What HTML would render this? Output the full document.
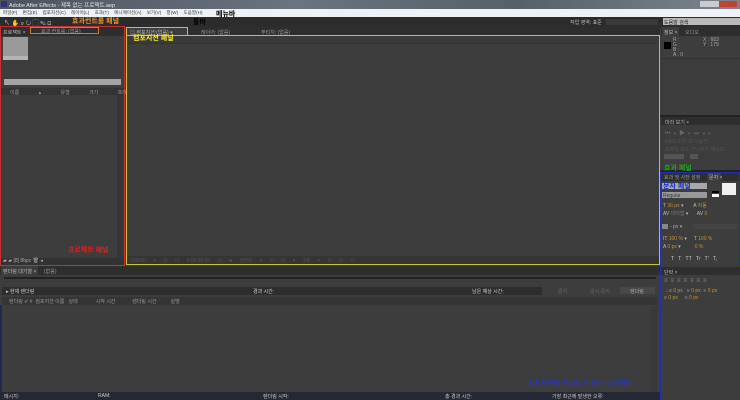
<!DOCTYPE html>
<html><head><meta charset="utf-8"><style>
*{margin:0;padding:0;box-sizing:border-box}
body{width:740px;height:400px;background:#3d3d3d;position:relative;overflow:hidden;font-family:"Liberation Sans","Noto Sans CJK KR",sans-serif;font-size:5px;color:#aaa}
div{position:absolute}
.t{white-space:nowrap}
</style></head><body>
<!-- title -->
<div style="left:0;top:0;width:740px;height:9px;background:linear-gradient(90deg,#4a5560,#6a7480 40%,#55606a 70%,#7a8590)"></div>
<div style="left:1px;top:1px;width:6px;height:6px;background:#3b2e7a"></div>
<div class="t" style="left:9px;top:1px;color:#e8e8e8;font-size:5.5px">Adobe After Effects - 제목 없는 프로젝트.aep</div>
<div style="left:700px;top:1px;width:13px;height:6px;background:#c8ccd0"></div>
<div style="left:713px;top:1px;width:6px;height:6px;background:#c8ccd0"></div>
<div style="left:719px;top:1px;width:18px;height:6px;background:#c84030"></div>
<!-- menu -->
<div style="left:0;top:9px;width:740px;height:8px;background:#eef1f5"></div>
<div class="t" style="left:3px;top:10px;color:#333;font-size:4.6px;word-spacing:4px">파일(F) 편집(E) 컴포지션(C) 레이어(L) 효과(T) 애니메이션(A) 보기(V) 창(W) 도움말(H)</div>
<div class="t" style="left:216px;top:9px;color:#000;font-size:7px;font-weight:bold">메뉴바</div>
<!-- toolbar -->
<div style="left:0;top:17px;width:740px;height:10px;background:#2c2c2c"></div>
<div class="t" style="left:4px;top:18px;color:#ddd;font-size:6px">↖ ✋ ⌕ ↻ ⬚ ✎ ⊡</div>
<div class="t" style="left:72px;top:16px;color:#e8902a;font-size:7px;font-weight:bold">효과컨트롤 패널</div>
<div class="t" style="left:193px;top:17px;color:#000;font-size:7px;font-weight:bold">툴바</div>
<div class="t" style="left:570px;top:19px;color:#bbb">작업 영역: 표준</div>
<div style="left:606px;top:19px;width:52px;height:6px;background:#3a3a3a"></div>
<div style="left:663px;top:18px;width:77px;height:7px;background:#b9b9b9"></div>
<div class="t" style="left:664px;top:18.5px;color:#222">도움말 검색</div>
<!-- project panel -->
<div style="left:0;top:26px;width:125px;height:240px;background:#3d3d3d;border:1px solid #c83030"></div>
<div style="left:1px;top:27px;width:123px;height:9px;background:#2e2e2e"></div>
<div class="t" style="left:3px;top:29px;color:#bbb">프로젝트 ×</div>
<div style="left:30px;top:27px;width:69px;height:7px;border:1px solid #d07a20"></div>
<div class="t" style="left:41px;top:28px;color:#999">효과 컨트롤: (없음)</div>
<div style="left:3px;top:37px;width:25px;height:23px;background:#9a9a9a"></div>
<div style="left:3px;top:56px;width:25px;height:4px;background:#b5b5b5"></div>
<div style="left:4px;top:79px;width:117px;height:6px;background:#a5a5a5"></div>
<div style="left:1px;top:88px;width:123px;height:7px;background:#343434"></div>
<div class="t" style="left:10px;top:89px;color:#999;word-spacing:18px">이름 ▴ 유형 크기 프레임</div>
<div style="left:117px;top:95px;width:6px;height:163px;background:#353535"></div>
<div class="t" style="left:68px;top:245px;color:#e02020;font-size:7px;font-weight:bold">프로젝트 패널</div>
<div style="left:1px;top:258px;width:123px;height:7px;background:#333"></div>
<div class="t" style="left:3px;top:258px;color:#aaa">▰ ▰ [8] 8bpc 🗑 ◂</div>
<!-- comp panel -->
<div style="left:126px;top:27px;width:534px;height:9px;background:#2e2e2e"></div>
<div style="left:126px;top:27px;width:62px;height:9px;border:1px solid #c8c040;border-bottom:none;background:#3d3d3d"></div>
<div class="t" style="left:130px;top:28.5px;color:#bbb">▤ 컴포지션:(없음) ▾</div>
<div class="t" style="left:201px;top:28.5px;color:#999">레이어: (없음)</div>
<div class="t" style="left:261px;top:28.5px;color:#999">푸티지: (없음)</div>
<div style="left:126px;top:35px;width:534px;height:230px;border:1px solid #c8c040;background:#3d3d3d"></div>
<div style="left:127px;top:36px;width:532px;height:8px;background:#3a3a3a;border-bottom:1px solid #333"></div>
<div class="t" style="left:133px;top:33px;color:#ffee30;font-size:7px;font-weight:bold">컴포지션 패널</div>
<div style="left:127px;top:256px;width:532px;height:8px;background:#353535"></div>
<div class="t" style="left:130px;top:257px;color:#555;word-spacing:6px">(100%) ▾ ⊡ ⊡ 0:00:00:00 ⊡ ♣ (전체) ▾ ⊡ ⊡ ▾ 1뷰 ▾ ⊡ ⊡ ⊡</div>
<!-- right: info -->
<div style="left:661px;top:27px;width:79px;height:9px;background:#2e2e2e"></div>
<div style="left:662px;top:27px;width:17px;height:9px;background:#3d3d3d"></div>
<div class="t" style="left:664px;top:29px;color:#bbb">정보 ×</div>
<div class="t" style="left:685px;top:29px;color:#999">오디오</div>
<div style="left:664px;top:42px;width:7px;height:7px;background:#000"></div>
<div class="t" style="left:673px;top:38px;color:#aaa;line-height:5px">R :<br>G :<br>B :<br>A : 0</div>
<div class="t" style="left:703px;top:38px;color:#aaa;line-height:5px">X : 683<br>Y : 179</div>
<div style="left:661px;top:58px;width:79px;height:1px;background:#333"></div>
<div style="left:660px;top:115px;width:80px;height:2px;background:#222"></div>
<div style="left:661px;top:117px;width:79px;height:8px;background:#2e2e2e"></div>
<div class="t" style="left:665px;top:119px;color:#bbb">미리 보기 ×</div>
<div class="t" style="left:665px;top:128px;color:#666;font-size:6px;letter-spacing:3px">⏮◂▶▸⏭◂▸</div>
<div class="t" style="left:665px;top:138px;color:#555;line-height:8px">RAM 미리 보기 옵션<br>프레임 속도 건너뛰기 해상도</div>
<div style="left:664px;top:154px;width:20px;height:5px;background:#555"></div>
<div style="left:690px;top:154px;width:8px;height:5px;background:#555"></div>
<div style="left:660px;top:170px;width:80px;height:2px;background:#222"></div>
<div class="t" style="left:664px;top:163px;color:#20a020;font-size:7px;font-weight:bold">효과 패널</div>
<!-- character -->
<div style="left:660px;top:172px;width:80px;height:94px;border:1px solid #2030b0;background:#3d3d3d"></div>
<div style="left:661px;top:173px;width:78px;height:8px;background:#2e2e2e"></div>
<div class="t" style="left:664px;top:174px;color:#999">효과 및 사전 설정</div>
<div style="left:707px;top:173px;width:14px;height:8px;background:#3d3d3d"></div>
<div class="t" style="left:709px;top:174px;color:#bbb">문자 ×</div>
<div style="left:662px;top:183px;width:45px;height:6px;background:#a8a8a8"></div>
<div class="t" style="left:663px;top:181px;color:#1530d0;font-size:7px;font-weight:bold">문자 패널</div>
<div style="left:662px;top:192px;width:45px;height:6px;background:#999"></div>
<div class="t" style="left:663px;top:192.5px;color:#333">Regular</div>
<div style="left:722px;top:183px;width:14px;height:12px;background:#f0f0f0"></div>
<div style="left:712px;top:191px;width:7px;height:2px;background:#000"></div>
<div style="left:712px;top:194px;width:7px;height:3px;background:#fff"></div>
<div class="t" style="left:663px;top:202px;color:#bbb;font-size:5px;line-height:8px">T <span style="color:#c8902a">36 px</span> ▾ &nbsp;&nbsp;&nbsp;&nbsp;&nbsp;&nbsp;A <span style="color:#c8902a">자동</span><br>AV <span style="color:#777">미터법</span> ▾ &nbsp;&nbsp;&nbsp;&nbsp;&nbsp;AV <span style="color:#c8902a">0</span></div>
<div style="left:662px;top:224px;width:6px;height:5px;background:#888"></div>
<div class="t" style="left:670px;top:224px;color:#aaa">- px ▾</div>
<div style="left:693px;top:224px;width:44px;height:5px;background:#444"></div>
<div class="t" style="left:663px;top:235px;color:#bbb;line-height:8px">IT <span style="color:#c8902a">100 %</span> ▾ &nbsp;&nbsp;&nbsp;&nbsp;T <span style="color:#c8902a">100 %</span><br>A <span style="color:#c8902a">0 px</span> ▾ &nbsp;&nbsp;&nbsp;&nbsp;&nbsp;&nbsp;&nbsp;&nbsp;&nbsp;<span style="color:#c8902a">0 %</span></div>
<div class="t" style="left:671px;top:256px;color:#ccc;word-spacing:3px">T T TT Tr T' T,</div>
<!-- paragraph -->
<div style="left:660px;top:266px;width:80px;height:134px;border-left:1px solid #2030b0;background:#3d3d3d"></div>
<div style="left:661px;top:267px;width:79px;height:8px;background:#2e2e2e"></div>
<div class="t" style="left:664px;top:269px;color:#bbb">단락 ×</div>
<div class="t" style="left:664px;top:278px;color:#888;font-size:6px;letter-spacing:3px">≡≡≡≡≡≡≡</div>
<div class="t" style="left:664px;top:288px;color:#999;line-height:7px">→≡ <span style="color:#c8902a">0 px</span> &nbsp;&nbsp;≡ <span style="color:#c8902a">0 px</span> &nbsp;≡ <span style="color:#c8902a">0 px</span><br>≡ <span style="color:#c8902a">0 px</span> &nbsp;&nbsp;&nbsp;&nbsp;≡ <span style="color:#c8902a">0 px</span></div>
<!-- render queue -->
<div style="left:0;top:266px;width:660px;height:134px;background:#3d3d3d"></div>
<div style="left:0;top:266px;width:660px;height:9px;background:#2e2e2e"></div>
<div style="left:1px;top:266px;width:37px;height:9px;background:#3d3d3d"></div>
<div class="t" style="left:3px;top:268px;color:#bbb">렌더링 대기열 ×</div>
<div class="t" style="left:44px;top:268px;color:#999">(없음)</div>
<div style="left:4px;top:277px;width:652px;height:2px;background:#222"></div>
<div style="left:2px;top:287px;width:540px;height:8px;background:#2d2d2d"></div>
<div class="t" style="left:6px;top:288px;color:#ccc">▸ 현재 렌더링</div>
<div class="t" style="left:253px;top:288px;color:#ccc">경과 시간:</div>
<div class="t" style="left:472px;top:288px;color:#ccc">남은 예상 시간:</div>
<div class="t" style="left:558px;top:288px;color:#666">중지</div>
<div class="t" style="left:590px;top:288px;color:#666">일시 중지</div>
<div style="left:620px;top:287px;width:35px;height:7px;background:#484848"></div>
<div class="t" style="left:630px;top:288px;color:#aaa">렌더링</div>
<div style="left:2px;top:297px;width:656px;height:8px;background:#353535"></div>
<div class="t" style="left:9px;top:298px;color:#999">렌더링 ✐ # &nbsp;컴포지션 이름 &nbsp;&nbsp;상태 &nbsp;&nbsp;&nbsp;&nbsp;&nbsp;&nbsp;&nbsp;&nbsp;&nbsp;&nbsp;&nbsp;&nbsp;시작 시간 &nbsp;&nbsp;&nbsp;&nbsp;&nbsp;&nbsp;&nbsp;&nbsp;&nbsp;&nbsp;&nbsp;렌더링 시간 &nbsp;&nbsp;&nbsp;&nbsp;&nbsp;&nbsp;&nbsp;&nbsp;&nbsp;설명</div>
<div style="left:0;top:305px;width:2px;height:87px;background:#202a50"></div>
<div style="left:651px;top:306px;width:6px;height:86px;background:#383838"></div>
<div class="t" style="left:528px;top:378px;color:#2838b8;font-size:7px;font-weight:bold">컴포지션을 편집할 수 있는 타임라인</div>
<div style="left:0;top:392px;width:660px;height:8px;background:#252835"></div>
<div class="t" style="left:4px;top:393px;color:#ccc">메시지:</div>
<div class="t" style="left:98px;top:393px;color:#ccc">RAM:</div>
<div class="t" style="left:263px;top:393px;color:#ccc">렌더링 시작:</div>
<div class="t" style="left:445px;top:393px;color:#ccc">총 경과 시간:</div>
<div class="t" style="left:552px;top:393px;color:#ccc">가장 최근에 발생한 오류:</div>
</body></html>
